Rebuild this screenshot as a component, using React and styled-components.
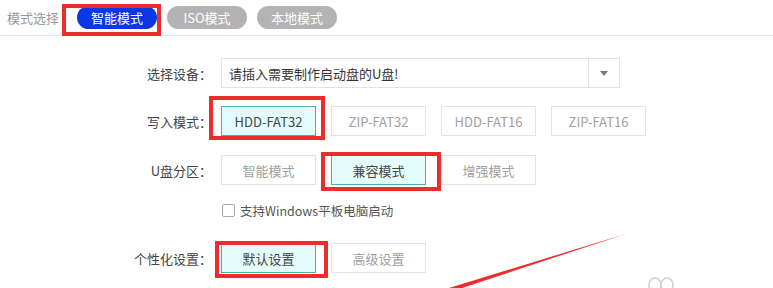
import styled, { createGlobalStyle } from 'styled-components';

const GlobalStyle = createGlobalStyle`
  html, body {
    margin: 0;
    padding: 0;
    background: #fff;
  }
  body {
    font-family: "Noto Sans CJK SC", "Noto Sans", sans-serif;
    color: #333;
  }
`;

// red annotation frame drawn over a part, insets given per side
const Marked = styled.div`
  position: relative;
  &::after {
    content: '';
    position: absolute;
    top: ${p => p.$t}px;
    right: ${p => p.$r}px;
    bottom: ${p => p.$b}px;
    left: ${p => p.$l}px;
    border: 4px solid #ec2d2d;
    pointer-events: none;
  }
`;

const Page = styled.div`
  position: relative;
  width: 773px;
  height: 288px;
  overflow: hidden;
`;

const Header = styled.div`
  display: flex;
  align-items: center;
  height: 35px;
  padding-left: 7px;
  border-bottom: 1px solid #e6e6e6;
`;

const HeaderLabel = styled.span`
  font-size: 13px;
  color: #999;
  margin-right: 18px;
`;

const Tabs = styled.div`
  display: flex;
  gap: 10px;
`;

const Tab = styled.div`
  width: 80px;
  height: 23px;
  border-radius: 12px;
  background: ${p => (p.$active ? '#0a38e6' : '#b3b3b3')};
  color: #fff;
  font-size: 13px;
  display: flex;
  align-items: center;
  justify-content: center;
`;

const Form = styled.div`
  display: flex;
  flex-direction: column;
  padding-top: 22px;
`;

const Row = styled.div`
  display: grid;
  grid-template-columns: 212px 1fr;
  column-gap: 9px;
  align-items: center;
  margin-top: ${p => p.$mt || 0}px;
`;

const Label = styled.span`
  text-align: right;
  font-size: 13px;
  color: #444;
`;

const Select = styled.div`
  width: 397px;
  height: 28px;
  border: 1px solid #e2e2e2;
  display: flex;
  align-items: center;
`;

const SelectText = styled.span`
  flex: 1;
  padding-left: 7px;
  font-size: 13px;
  color: #333;
`;

const SelectArrow = styled.div`
  width: 30px;
  height: 100%;
  border-left: 1px solid #e2e2e2;
  display: flex;
  align-items: center;
  justify-content: center;
  &::before {
    content: '';
    border-left: 4px solid transparent;
    border-right: 4px solid transparent;
    border-top: 5px solid #7a7a7a;
  }
`;

const Options = styled.div`
  display: flex;
  gap: 15px;
`;

const Option = styled.div`
  box-sizing: border-box;
  width: 95px;
  height: 30px;
  border: 1px solid ${p => (p.$active ? '#4bb0aa' : '#e3e3e3')};
  background: ${p => (p.$active ? '#e4fdfc' : '#fff')};
  color: ${p => (p.$active ? '#444' : '#a0a0a0')};
  font-size: 13px;
  display: flex;
  align-items: center;
  justify-content: center;
`;

const Check = styled.label`
  display: flex;
  align-items: center;
  gap: 5px;
  height: 18px;
  font-size: 12.5px;
  color: #555;
  margin-left: 1px;
`;

const Box = styled.span`
  width: 11px;
  height: 11px;
  border: 1px solid #a8a8a8;
  border-radius: 2px;
  background: #fff;
`;

const Overlay = styled.svg`
  position: absolute;
  left: 0;
  top: 0;
  pointer-events: none;
`;

const OptionGroup = ({ items, active, mark }) => (
  <Options>
    {items.map((it, i) => {
      const btn = <Option key={it} $active={i === active}>{it}</Option>;
      return mark && i === active ? (
        <Marked key={it} $t={mark[0]} $r={mark[1]} $b={mark[2]} $l={mark[3]}>
          {btn}
        </Marked>
      ) : btn;
    })}
  </Options>
);

export default function App() {
  return (
    <Page>
      <GlobalStyle />
      <Header>
        <HeaderLabel>模式选择</HeaderLabel>
        <Tabs>
          <Marked $t={-2} $r={-4} $b={-7} $l={-15}>
            <Tab $active>智能模式</Tab>
          </Marked>
          <Tab>ISO模式</Tab>
          <Tab>本地模式</Tab>
        </Tabs>
      </Header>

      <Form>
        <Row>
          <Label>选择设备：</Label>
          <Select>
            <SelectText>请插入需要制作启动盘的U盘!</SelectText>
            <SelectArrow />
          </Select>
        </Row>

        <Row $mt={18}>
          <Label>写入模式：</Label>
          <OptionGroup
            items={['HDD-FAT32', 'ZIP-FAT32', 'HDD-FAT16', 'ZIP-FAT16']}
            active={0}
            mark={[-10, -9, -4, -12]}
          />
        </Row>

        <Row $mt={19}>
          <Label>U盘分区：</Label>
          <OptionGroup
            items={['智能模式', '兼容模式', '增强模式']}
            active={1}
            mark={[-3, -15, -6, -10]}
          />
        </Row>

        <Row $mt={16}>
          <span />
          <Check>
            <Box />
            支持Windows平板电脑启动
          </Check>
        </Row>

        <Row $mt={24}>
          <Label>个性化设置：</Label>
          <OptionGroup
            items={['默认设置', '高级设置']}
            active={0}
            mark={[-2, -12, -5, -6]}
          />
        </Row>
      </Form>

      <Overlay width="773" height="288" viewBox="0 0 773 288">
        <polygon points="436,292 450,292 627,233.5" fill="#ec2d2d" />
        <ellipse cx="655" cy="285" rx="6" ry="7" fill="none" stroke="#d0d0d0" strokeWidth="1.5" />
        <ellipse cx="667" cy="285" rx="6" ry="7" fill="none" stroke="#d0d0d0" strokeWidth="1.5" />
      </Overlay>
    </Page>
  );
}
